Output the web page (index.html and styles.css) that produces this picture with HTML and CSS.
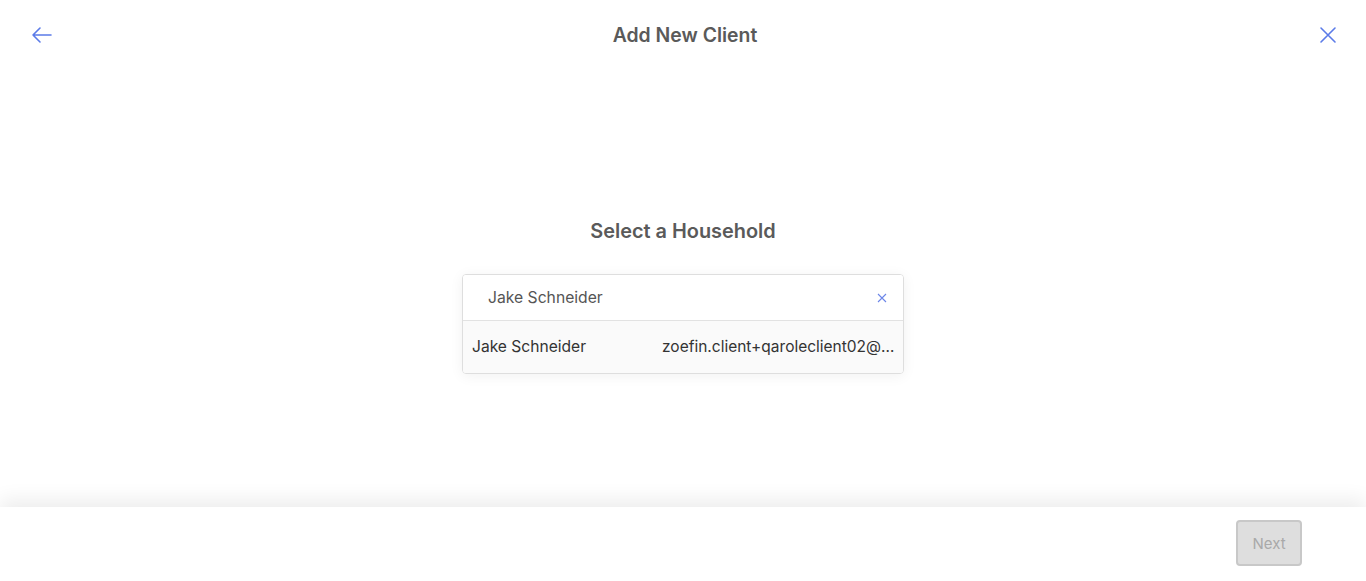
FILE: index.html
```
<!DOCTYPE html>
<html lang="en">
<head>
<meta charset="utf-8">
<title>Add New Client</title>
<link rel="stylesheet" href="styles.css">
</head>
<body>
<div class="page">
  <header class="topbar">
    <button class="icon-btn" aria-label="Back">
      <svg width="24" height="24" viewBox="0 0 24 24" fill="none" stroke="#5b7be8" stroke-width="1.6" stroke-linecap="round" stroke-linejoin="round"><path d="M21 12H3M10 5l-7 7 7 7"/></svg>
    </button>
    <h1 class="title">Add New Client</h1>
    <button class="icon-btn" aria-label="Close">
      <svg width="24" height="24" viewBox="0 0 24 24" fill="none" stroke="#5b7be8" stroke-width="1.6" stroke-linecap="round"><path d="M5 5l14 14M19 5L5 19"/></svg>
    </button>
  </header>
  <main class="content">
    <h2 class="heading">Select a Household</h2>
    <div class="combo">
      <div class="combo-input">
        <span class="combo-value">Jake Schneider</span>
        <svg class="clear" width="10" height="10" viewBox="0 0 10 10" fill="none" stroke="#6c86e8" stroke-width="1.1"><path d="M1 1l8 8M9 1L1 9"/></svg>
      </div>
      <div class="option">
        <span class="opt-name">Jake Schneider</span>
        <span class="opt-email">zoefin.client+qaroleclient02@zoefin.com</span>
      </div>
    </div>
  </main>
  <footer class="footer">
    <button class="next" disabled>Next</button>
  </footer>
</div>
</body>
</html>
```
FILE: styles.css
```
* { box-sizing: border-box; }
html, body { margin: 0; padding: 0; }
body {
  font-family: Inter, "Noto Sans", sans-serif;
  background: #fff;
  color: #555;
}
.page {
  height: 100vh;
  display: flex;
  flex-direction: column;
}
.topbar {
  height: 70px;
  display: flex;
  align-items: center;
  justify-content: space-between;
  padding: 0 26px 0 30px;
}
.icon-btn {
  background: none;
  border: 0;
  padding: 0;
  width: 24px;
  height: 24px;
  display: flex;
  cursor: pointer;
}
.title {
  margin: 0;
  font-size: 19.4px;
  font-weight: 600;
  color: #5a5a5a;
}
.content {
  flex: 1;
  display: flex;
  flex-direction: column;
  align-items: center;
}
.heading {
  margin: 149px 0 31px;
  font-size: 19.9px;
  line-height: 24px;
  font-weight: 600;
  color: #5a5a5a;
}
.combo {
  width: 442px;
  border: 1px solid #dedede;
  border-radius: 4px;
  box-shadow: 0 2px 14px rgba(0,0,0,0.06);
  overflow: hidden;
}
.combo-input {
  height: 46px;
  display: flex;
  align-items: center;
  justify-content: space-between;
  padding: 0 16px 0 25px;
  border-bottom: 1px solid #e2e2e2;
  background: #fff;
}
.combo-value {
  font-size: 15.7px;
  color: #555;
}
.option {
  height: 52px;
  display: flex;
  align-items: center;
  padding: 0 8px 2px 9px;
  background: #fafafa;
  font-size: 15.6px;
  color: #333;
}
.opt-name {
  width: 190px;
  flex: none;
}
.opt-email {
  flex: 1;
  min-width: 0;
  font-size: 15.5px;
  white-space: nowrap;
  overflow: hidden;
  text-overflow: ellipsis;
}
.footer {
  height: 74px;
  flex: none;
  display: flex;
  align-items: center;
  justify-content: flex-end;
  padding: 0 64px 2px 0;
  background: #fff;
  box-shadow: 0 -8px 18px rgba(0,0,0,0.07);
  position: relative;
}
.next {
  width: 66px;
  height: 46px;
  border: 2px solid #c8c8c8;
  border-radius: 4px;
  background: #dedede;
  color: #a9a9a9;
  font-family: Inter, "Noto Sans", sans-serif;
  font-size: 15px;
}
```
